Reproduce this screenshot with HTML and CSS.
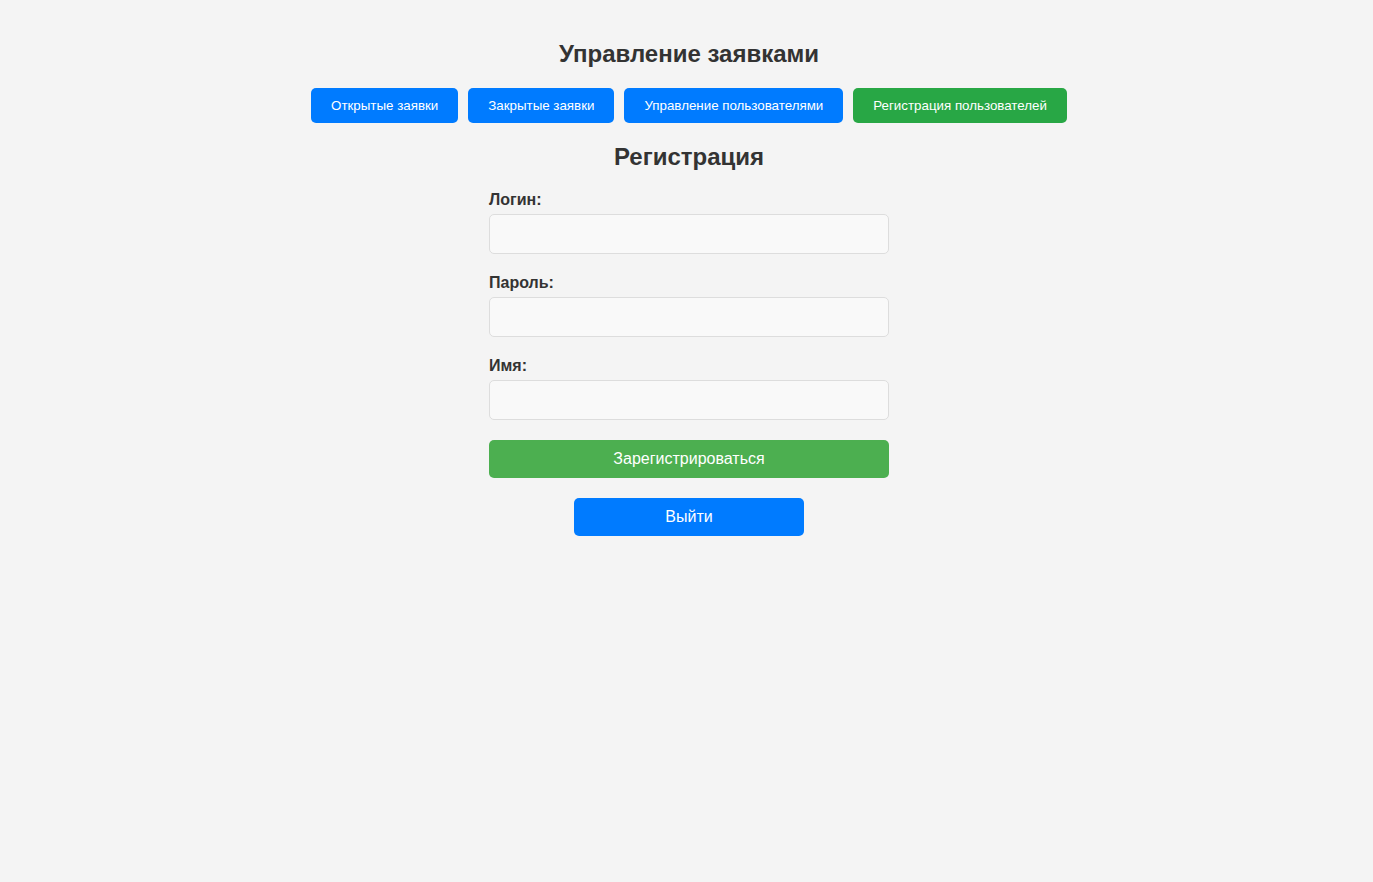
FILE: index.html
```html
<!DOCTYPE html>
<html lang="ru">
<head>
<meta charset="utf-8">
<title>Управление заявками</title>
<link rel="stylesheet" href="styles.css">
</head>
<body>
<div class="page">
  <h1 class="title">Управление заявками</h1>
  <nav class="nav">
    <button class="nav-btn">Открытые заявки</button>
    <button class="nav-btn">Закрытые заявки</button>
    <button class="nav-btn">Управление пользователями</button>
    <button class="nav-btn nav-btn-active">Регистрация пользователей</button>
  </nav>
  <h2 class="subtitle">Регистрация</h2>
  <form class="form">
    <label class="label" for="login">Логин:</label>
    <input class="input" id="login" type="text">
    <label class="label" for="password">Пароль:</label>
    <input class="input" id="password" type="password">
    <label class="label" for="name">Имя:</label>
    <input class="input" id="name" type="text">
    <button type="button" class="submit">Зарегистрироваться</button>
  </form>
  <button class="logout">Выйти</button>
</div>
</body>
</html>
```
FILE: styles.css
```css
html, body {
  margin: 0;
  padding: 0;
  background: #f4f4f4;
}
body {
  font-family: "Liberation Sans", Arial, sans-serif;
  color: #333;
}
.page {
  display: flex;
  flex-direction: column;
  align-items: center;
  padding-top: 40px;
  padding-left: 5px;
}
.title {
  margin: 0 0 20px;
  font-size: 24px;
  line-height: 28px;
  font-weight: bold;
  color: #333;
}
.nav {
  display: flex;
  gap: 10px;
  justify-content: center;
}
.nav-btn {
  font-family: "Liberation Sans", Arial, sans-serif;
  font-size: 13.333px;
  line-height: 15px;
  padding: 10px 20px;
  border: none;
  border-radius: 5px;
  background: #007bff;
  color: #fff;
  cursor: pointer;
}
.nav-btn-active {
  background: #28a745;
}
.subtitle {
  margin: 20px 0 20px;
  font-size: 24px;
  line-height: 28px;
  font-weight: bold;
  color: #333;
}
.form {
  display: flex;
  flex-direction: column;
  width: 400px;
}
.label {
  font-size: 16px;
  line-height: 18px;
  font-weight: bold;
  color: #333;
  margin-bottom: 5px;
}
.input {
  box-sizing: border-box;
  height: 40px;
  width: 100%;
  margin: 0 0 20px;
  padding: 8px 10px;
  border: 1px solid #ddd;
  border-radius: 5px;
  background: #f9f9f9;
  font-size: 16px;
}
.submit {
  box-sizing: border-box;
  height: 38px;
  width: 100%;
  border: none;
  border-radius: 5px;
  background: #4caf50;
  color: #fff;
  font-family: "Liberation Sans", Arial, sans-serif;
  font-size: 16px;
  cursor: pointer;
}
.logout {
  box-sizing: border-box;
  margin-top: 20px;
  width: 230px;
  height: 38px;
  border: none;
  border-radius: 5px;
  background: #007bff;
  color: #fff;
  font-family: "Liberation Sans", Arial, sans-serif;
  font-size: 16px;
  cursor: pointer;
}
```
